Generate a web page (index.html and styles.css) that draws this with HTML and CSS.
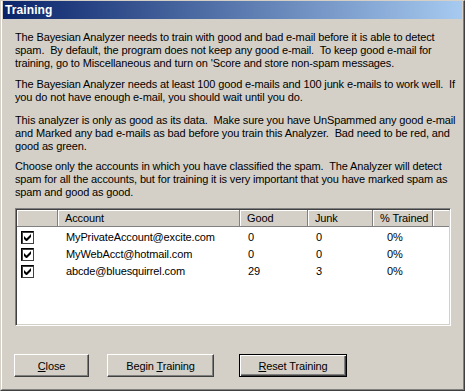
FILE: index.html
```html
<!DOCTYPE html>
<html>
<head>
<meta charset="utf-8">
<link rel="stylesheet" href="styles.css">
</head>
<body>
<div class="window">
  <div class="frame">
    <div class="titlebar"><span class="title">Training</span></div>
    <div class="content">
      <p class="p1">The Bayesian Analyzer needs to train with good and bad e-mail before it is able to detect<br>spam.&nbsp; By default, the program does not keep any good e-mail.&nbsp; To keep good e-mail for<br>training, go to Miscellaneous and turn on 'Score and store non-spam messages.</p>
      <p class="p2">The Bayesian Analyzer needs at least 100 good e-mails and 100 junk e-mails to work well.&nbsp; If<br>you do not have enough e-mail, you should wait until you do.</p>
      <p class="p3">This analyzer is only as good as its data.&nbsp; Make sure you have UnSpammed any good e-mail<br>and Marked any bad e-mails as bad before you train this Analyzer.&nbsp; Bad need to be red, and<br>good as green.</p>
      <p class="p4">Choose only the accounts in which you have classified the spam.&nbsp; The Analyzer will detect<br>spam for all the accounts, but for training it is very important that you have marked spam as<br>spam and good as good.</p>

      <div class="list">
        <div class="grid head">
          <div class="hc"></div>
          <div class="hc">Account</div>
          <div class="hc">Good</div>
          <div class="hc">Junk</div>
          <div class="hc">% Trained</div>
          <div class="hc"></div>
        </div>
        <div class="rows">
          <div class="grid row">
            <div class="cc"><span class="cb"><svg width="9" height="9" viewBox="0 0 9 9"><path d="M1 3v3l2 2h1l4-4V1L3.5 5.5z" fill="#000"/></svg></span></div>
            <div class="c">MyPrivateAccount@excite.com</div>
            <div class="c">0</div>
            <div class="c">0</div>
            <div class="c pct">0%</div>
            <div class="c"></div>
          </div>
          <div class="grid row">
            <div class="cc"><span class="cb"><svg width="9" height="9" viewBox="0 0 9 9"><path d="M1 3v3l2 2h1l4-4V1L3.5 5.5z" fill="#000"/></svg></span></div>
            <div class="c">MyWebAcct@hotmail.com</div>
            <div class="c">0</div>
            <div class="c">0</div>
            <div class="c pct">0%</div>
            <div class="c"></div>
          </div>
          <div class="grid row">
            <div class="cc"><span class="cb"><svg width="9" height="9" viewBox="0 0 9 9"><path d="M1 3v3l2 2h1l4-4V1L3.5 5.5z" fill="#000"/></svg></span></div>
            <div class="c">abcde@bluesquirrel.com</div>
            <div class="c">29</div>
            <div class="c">3</div>
            <div class="c pct">0%</div>
            <div class="c"></div>
          </div>
        </div>
      </div>

      <div class="buttons">
        <div class="btn btn-close"><span class="lbl"><span class="u">C</span>lose</span></div>
        <div class="btn btn-begin"><span class="lbl">Begin <span class="u">T</span>raining</span></div>
        <div class="btn btn-reset default"><span class="lbl"><span class="u">R</span>eset Training</span></div>
      </div>
    </div>
  </div>
</div>
</body>
</html>
```
FILE: styles.css
```css
html, body {
  margin: 0;
  padding: 0;
  background: #d4d0c8;
}
body {
  font-family: "Liberation Sans", Arial, sans-serif;
  font-size: 11px;
  color: #000;
}
.window {
  box-sizing: border-box;
  width: 465px;
  height: 391px;
  border: 1px solid;
  border-color: #d4d0c8 #404040 #404040 #d4d0c8;
  background: #d4d0c8;
}
.frame {
  box-sizing: border-box;
  height: 100%;
  border: 1px solid;
  border-top: 0;
  border-color: #fff #808080 #808080 #fff;
  padding: 0 1px 1px 1px;
  display: flex;
  flex-direction: column;
}
.titlebar {
  height: 18px;
  background: linear-gradient(to right, #0a246a, #a6caf0);
  display: flex;
  align-items: center;
  padding-left: 2px;
}
.title {
  color: #fff;
  font-weight: bold;
  font-size: 12px;
  letter-spacing: 0.1px;
}
.content {
  flex: 1;
  padding: 12px 11px 0 12px;
  display: flex;
  flex-direction: column;
}
.content p {
  margin: 0;
  line-height: 13px;
  white-space: nowrap;
  letter-spacing: -0.13px;
}
.p2 { margin-top: 8px !important; }
.p3 { margin-top: 10px !important; }
.p4 { margin-top: 7px !important; }

.list {
  margin-top: 9px;
  box-sizing: border-box;
  height: 118px;
  border: 1px solid;
  border-color: #808080 #fff #fff #808080;
  box-shadow: inset 1px 1px #404040, inset -1px -1px #d4d0c8;
  padding: 2px;
  background: #fff;
}
.grid {
  display: grid;
  grid-template-columns: 41px 182px 68px 65px 60px 1fr;
}
.head {
  height: 17px;
  margin: -1px -1px 0 -1px;
}
.hc {
  box-sizing: border-box;
  background: #d4d0c8;
  border-right: 1px solid #808080;
  border-bottom: 1px solid #808080;
  box-shadow: inset 1px 1px #fff;
  padding-left: 7px;
  line-height: 16px;
  letter-spacing: -0.13px;
}
.hc:last-child {
  border-right: 0;
}
.rows {
  padding-top: 2px;
}
.row {
  height: 17px;
  align-items: center;
  letter-spacing: -0.13px;
}
.row .c {
  padding-left: 7px;
  line-height: 17px;
}
.row .pct {
  padding-left: 13px;
}
.cc {
  display: flex;
  align-items: center;
  padding-left: 3px;
}
.cb {
  box-sizing: border-box;
  width: 13px;
  height: 13px;
  border: 1px solid;
  border-color: #000 #404040 #404040 #000;
  box-shadow: inset 1px 1px #404040;
  background: #fff;
  display: flex;
  align-items: center;
  justify-content: center;
}
.cb svg { display: block; }

.buttons {
  margin-top: 28px;
  display: flex;
  margin-left: -1px;
}
.btn {
  box-sizing: border-box;
  height: 23px;
  display: flex;
  align-items: center;
  justify-content: center;
  background: #d4d0c8;
  border: 1px solid;
  border-color: #fff #404040 #404040 #fff;
  box-shadow: inset -1px -1px #808080;
  letter-spacing: -0.13px;
}
.lbl { white-space: pre; }
.btn-close { width: 75px; }
.btn-begin { width: 107px; margin-left: 18px; }
.btn-reset { width: 108px; margin-left: 25px; }
.default {
  border: 1px solid #000;
  box-shadow: inset 1px 1px #fff, inset -1px -1px #404040, inset -2px -2px #808080;
}
.u { text-decoration: underline; }
```
